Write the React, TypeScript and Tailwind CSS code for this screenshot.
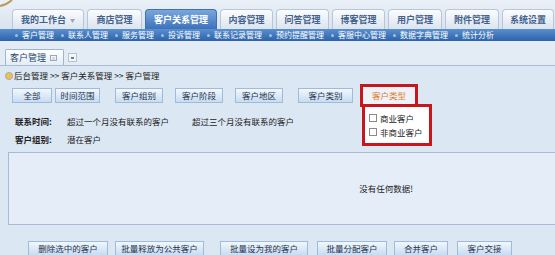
import React from "react";

const mainTabs = [
  { label: "我的工作台", w: 72, arrow: true },
  { label: "商店管理", w: 55 },
  { label: "客户关系管理", w: 72, active: true },
  { label: "内容管理", w: 53 },
  { label: "问答管理", w: 53 },
  { label: "博客管理", w: 53 },
  { label: "用户管理", w: 54 },
  { label: "附件管理", w: 54 },
  { label: "系统设置", w: 52 },
];

const subNav = ["客户管理", "联系人管理", "服务管理", "投诉管理", "联系记录管理", "预约提醒管理", "客服中心管理", "数据字典管理", "统计分析"];

const filters = [
  { label: "全部", w: 40, ml: 12 },
  { label: "时间范围", w: 45, ml: 3 },
  { label: "客户组别", w: 48, ml: 15 },
  { label: "客户阶段", w: 48, ml: 12 },
  { label: "客户地区", w: 48, ml: 12 },
  { label: "客户类别", w: 55, ml: 15 },
];

const actions = [
  { label: "删除选中的客户", w: 80, ml: 28 },
  { label: "批量释放为公共客户", w: 89, ml: 7 },
  { label: "批量设为我的客户", w: 88, ml: 16 },
  { label: "批量分配客户", w: 70, ml: 9 },
  { label: "合并客户", w: 54, ml: 7 },
  { label: "客户交接", w: 55, ml: 9 },
];

function Btn({label, w, ml}: {label: string, w: number, ml: number}) {
  return (
    <div style={{width: w, marginLeft: ml}}
         className="h-[15px] flex items-center justify-center border border-[#9fbbdc] bg-gradient-to-b from-[#f2f7fd] to-[#c8dcf1] text-[8.5px] text-[#1e3350]">
      {label}
    </div>
  );
}

function Check({label}: {label: string}) {
  return (
    <div className="flex items-center gap-[3px] h-[13px]">
      <span className="w-[8px] h-[8px] border border-[#8a8a8a] bg-white"></span>
      <span className="text-[8.5px] text-[#222]">{label}</span>
    </div>
  );
}

export default function App() {
  return (
    <div className="relative w-[555px] h-[255px] overflow-hidden bg-[#dce7f4] font-['Noto_Sans_CJK_SC',sans-serif] leading-none">
      {/* header */}
      <div className="bg-gradient-to-b from-[#eaf0f7] to-[#d9e3ef] pt-[9px]">
        <svg className="absolute left-0 top-0" width="14" height="8" viewBox="0 0 14 8">
          <path d="M0 6 Q6 5 12 0" stroke="#b89a62" strokeWidth="2" fill="none"/>
        </svg>
        <div className="flex gap-[3px] pl-[12px] items-end">
          {mainTabs.map(t => (
            <div key={t.label} style={{width: t.w}}
                 className={t.active
                   ? "h-[20px] rounded-t-[4px] border border-b-0 border-[#3f70b0] bg-gradient-to-b from-[#7aa6dc] to-[#3c72ba] text-white font-bold text-[9px] flex items-center justify-center"
                   : "h-[20px] rounded-t-[4px] border border-b-0 border-[#b7c6d9] bg-gradient-to-b from-[#fbfcfe] to-[#dbe4ef] text-[#42618c] font-bold text-[9px] flex items-center justify-center"}>
              {t.label}
              {t.arrow && <span className="ml-[4px] text-[5px] text-[#9aa6b5]">▼</span>}
            </div>
          ))}
        </div>
      </div>

      {/* sub navigation */}
      <div className="h-[12px] bg-gradient-to-b from-[#5a90cf] to-[#2c62a8] flex items-center pl-[15px] gap-[7px]">
        {subNav.map(s => (
          <div key={s} className="flex items-center gap-[4px] text-[8px] text-white">
            <span className="w-[3px] h-[3px] rounded-full bg-[#9cc0ea]"></span>
            {s}
          </div>
        ))}
      </div>

      {/* open page tabs */}
      <div className="h-[25px] bg-[#e3ebf5] border-b border-[#a9bdd6] flex items-end pl-[5px] gap-[4px]">
        <div className="h-[16px] w-[59px] rounded-t-[2px] border border-b-0 border-[#9fb4cd] bg-gradient-to-b from-[#ffffff] to-[#e5ecf5] flex items-center pl-[4px] gap-[4px] text-[9px] text-[#27476f]">
          客户管理
          <span className="w-[7px] h-[6px] border border-[#9aa8ba] text-[5px] text-[#8592a3] flex items-center justify-center">×</span>
        </div>
        <div className="mb-[3px] w-[9px] h-[9px] border border-[#b3c2d4] bg-[#f3f6fa] flex items-center justify-center">
          <span className="w-[3px] h-[2px] bg-[#6b7d95]"></span>
        </div>
      </div>

      {/* breadcrumb */}
      <div className="h-[17px] flex items-center pl-[5px] mt-[1px] text-[8.5px] text-[#222]">
        <span className="w-[8px] h-[8px] rounded-full border border-[#a3a9b2] bg-[#f5c04a] mr-[1px]"></span>
        后台管理 &gt;&gt; 客户关系管理 &gt;&gt; 客户管理
      </div>

      {/* filter buttons */}
      <div className="flex items-center h-[23px]">
        {filters.map(f => <Btn key={f.label} {...f} />)}
        <div className="ml-[7px] w-[58px] h-[23px] border-[3px] border-[#c8161d] bg-[#eef3fa] flex items-center justify-center text-[8.5px] text-[#e27a25]">
          客户类型
        </div>
      </div>

      {/* criteria rows */}
      <div className="pl-[15px] text-[8.5px] text-[#222]">
        <div className="flex items-center h-[16px] mt-[6px]">
          <span className="w-[52px] font-bold">联系时间:</span>
          <span className="w-[125px]">超过一个月没有联系的客户</span>
          <span>超过三个月没有联系的客户</span>
        </div>
        <div className="flex items-center h-[16px] mt-[2px]">
          <span className="w-[52px] font-bold">客户组别:</span>
          <span>潜在客户</span>
        </div>
      </div>

      {/* data area */}
      <div className="ml-[8px] mt-[5px] h-[73px] border border-r-0 border-[#a7bbd6] bg-[#e4edf8] flex items-center justify-center pl-[208px] text-[8.5px] text-[#222]">
        没有任何数据!
      </div>

      {/* bottom actions */}
      <div className="flex items-center mt-[16px]">
        {actions.map(a => <Btn key={a.label} {...a} />)}
      </div>

      {/* dropdown of 客户类型 */}
      <div className="absolute left-[362px] top-[104px] w-[70px] h-[42px] border-[3px] border-[#c8161d] bg-white flex flex-col justify-center pl-[4px] gap-[1px]">
        <Check label="商业客户" />
        <Check label="非商业客户" />
      </div>
    </div>
  );
}
